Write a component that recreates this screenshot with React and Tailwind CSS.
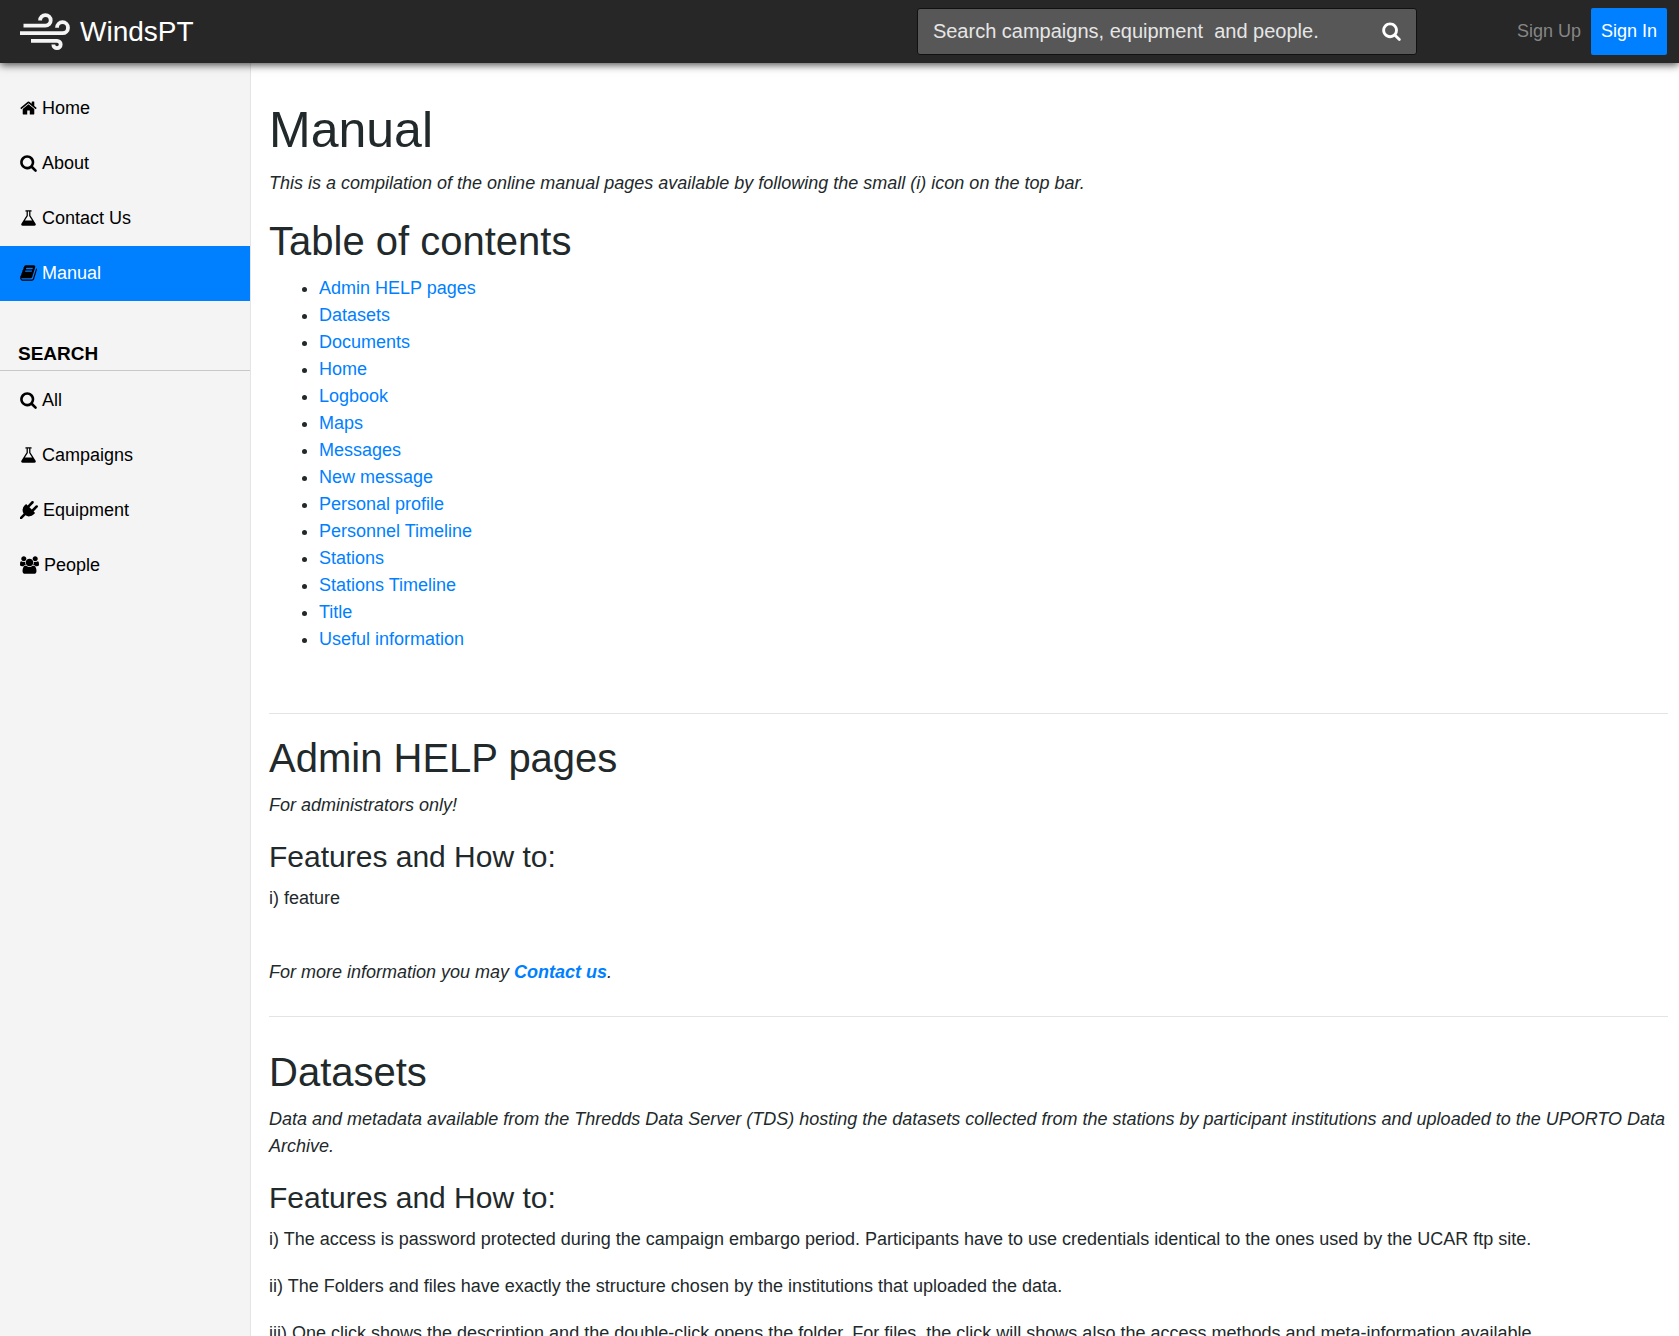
const ICONS = {
  home: [17, "64 0 1664 1792", "M1472 992v480q0 26-19 45t-45 19h-384v-384h-256v384h-384q-26 0-45-19t-19-45v-480q0-1 .5-3t.5-3l575-474 575 474q1 2 1 6zm223-69l-62 74q-8 9-21 11h-3q-13 0-21-7l-692-577-692 577q-12 8-24 7-13-2-21-11l-62-74q-8-10-7-23.500t11-21.500l719-599q32-26 76-26t76 26l244 204v-195q0-14 9-23t23-9h192q14 0 23 9t9 23v408l219 182q10 8 11 21.500t-7 23.500z"],
  search: [17, "64 0 1664 1792", "M1216 832q0-185-131.500-316.500t-316.500-131.500-316.500 131.500-131.500 316.500 131.500 316.500 316.500 131.500 316.500-131.500 131.500-316.500zm512 832q0 52-38 90t-90 38q-54 0-90-38l-343-342q-179 124-399 124-143 0-273.500-55.500t-225-150-150-225-55.500-273.500 55.500-273.500 150-225 225-150 273.500-55.500 273.500 55.500 225 150 150 225 55.500 273.500q0 220-124 399l343 343q37 37 37 90z"],
  flask: [17, "64 0 1664 1792", "M1591 1448q56 89 21.500 152.500t-140.500 63.500h-1152q-106 0-140.500-63.500t21.500-152.500l503-793v-399h-64q-26 0-45-19t-19-45 19-45 45-19h512q26 0 45 19t19 45-19 45-45 19h-64v399zm-779-725l-272 429h712l-272-429-20-31v-436h-128v436z"],
  book: [17, "64 0 1664 1792", "M1703 478q40 57 18 129l-275 906q-19 64-76.500 107.500t-122.500 43.500h-923q-77 0-148.500-53.500t-99.500-131.500q-24-67-2-127 0-4 3-27t4-37q1-8-3-21.500t-3-19.500q2-11 8-21t16.500-23.500 16.500-23.500q23-38 45-91.500t30-91.500q3-10 .5-30t-.5-28q3-11 17-28t17-23q21-36 42-92t25-90q1-9-2.500-32t.5-28q4-13 22-30.500t22-22.500q19-26 42.500-84.500t27.500-96.500q1-8-3-25.500t-2-26.500q2-8 9-18t18-23 17-21q8-12 16.500-30.500t15-35 16-36 19.500-32 26.500-23.500 36-11.500 47.500 5.500l-1 3q38-9 51-9h761q74 0 114 56t18 130l-274 906q-36 119-71.500 153.500t-128.500 34.500h-869q-27 0-38 15-11 16-1 43 24 70 144 70h923q29 0 56-15.500t35-41.500l300-987q7-22 5-57 38 15 59 43zm-1064 2q-4 13 2 22.500t20 9.500h608q13 0 25.500-9.500t16.500-22.500l21-64q4-13-2-22.500t-20-9.500h-608q-13 0-25.500 9.500t-16.500 22.500zm-83 256q-4 13 2 22.500t20 9.500h608q13 0 25.500-9.500t16.500-22.500l21-64q4-13-2-22.500t-20-9.500h-608q-13 0-25.500 9.500t-16.500 22.500z"],
  plug: [18, "0 0 1792 1792", "M1755 453q37 38 37 90.500t-37 90.500l-401 400 150 150-160 160q-163 163-389.500 186.500t-411.500-100.500l-362 362h-181v-181l362-362q-124-185-100.500-411.500t186.500-389.500l160-160 150 150 400-401q38-37 91-37t90 37 37 90.500-37 90.500l-400 401 234 234 401-400q38-37 91-37t90 37z"],
  group: [19, "0 0 1920 1792", "M593 896q-162 5-265 128h-134q-82 0-138-40.500t-56-118.500q0-353 124-353 6 0 43.500 21t97.500 42.500 119 21.500q67 0 133-23-5 37-5 66 0 139 81 256zm1071 637q0 120-73 189.500t-194 69.500h-874q-121 0-194-69.500t-73-189.500q0-53 3.500-103.500t14-109 26.500-108.500 43-97.500 62-81 85.500-53.500 111.500-20q10 0 43 21.500t73 48 107 48 135 21.500 135-21.500 107-48 73-48 43-21.500q61 0 111.500 20t85.500 53.500 62 81 43 97.500 26.500 108.500 14 109 3.500 103.500zm-1024-1277q0 106-75 181t-181 75-181-75-75-181 75-181 181-75 181 75 75 181zm704 384q0 159-112.500 271.500t-271.500 112.500-271.500-112.500-112.500-271.500 112.500-271.500 271.500-112.500 271.500 112.500 112.500 271.500zm576 225q0 78-56 118.500t-138 40.500h-134q-103-123-265-128 81-117 81-256 0-29-5-66 66 23 133 23 59 0 119-21.500t97.500-42.500 43.500-21q124 0 124 353zm-128-609q0 106-75 181t-181 75-181-75-75-181 75-181 181-75 181 75 75 181z"],
};

function Icon({ name }) {
  const [width, viewBox, d] = ICONS[name];
  return (
    <svg width={width} height="18" viewBox={viewBox} fill="#000" className="mb-0.5" aria-hidden="true">
      <path d={d} />
    </svg>
  );
}

function Logo() {
  return (
    <svg width="50" height="38" viewBox="0 0 50 38" fill="none" stroke="#f4f4f4" strokeWidth="3.8" aria-hidden="true">
      <path d="M3.500 12.700H25.400A5.300 5.300 0 1 0 20.100 7.400" />
      <path d="M0 20.200H42.500A5.500 5.500 0 1 0 37 14.700" />
      <path d="M11 27.800H37A3.700 3.700 0 1 1 33.300 31.500" />
    </svg>
  );
}

const MENU = [
  ["home", "Home"],
  ["search", "About"],
  ["flask", "Contact Us"],
  ["book", "Manual"],
];
const SEARCH_MENU = [
  ["search", "All"],
  ["flask", "Campaigns"],
  ["plug", "Equipment"],
  ["group", "People"],
];
const TOC = [
  "Admin HELP pages",
  "Datasets",
  "Documents",
  "Home",
  "Logbook",
  "Maps",
  "Messages",
  "New message",
  "Personal profile",
  "Personnel Timeline",
  "Stations",
  "Stations Timeline",
  "Title",
  "Useful information",
];

function NavItem({ icon, label, active }) {
  return (
    <li>
      <a
        href="#"
        aria-current={active ? "page" : undefined}
        className={`flex h-[55px] items-center gap-[5px] px-5 ${active ? "bg-[#007fff] text-white" : "text-black"}`}
      >
        <Icon name={icon} />
        {label}
      </a>
    </li>
  );
}

function H2({ children }) {
  return <h2 className="mb-2.5 text-[40px] leading-12">{children}</h2>;
}

function H3({ children }) {
  return <h3 className="mb-2.5 text-[30px] leading-9">{children}</h3>;
}

export default function App() {
  return (
    <div className="flex min-h-screen flex-col bg-white font-['Liberation_Sans',Arial,sans-serif] text-[18px] leading-[27px] text-[#22292b]">
      <header className="sticky top-0 z-10 flex h-[63px] shrink-0 items-center bg-[#272727] pr-3 pl-5 shadow-[0_2px_8px_rgba(0,0,0,0.7)]">
        <a href="#" className="flex items-center gap-2.5 text-[28px] text-white">
          <Logo />
          WindsPT
        </a>
        <form role="search" className="mr-[100px] ml-auto flex h-[47px] w-[500px] items-center rounded-[3px] border border-[#111] bg-[#575757] pr-[15px] pl-[15px]">
          <input
            type="text"
            aria-label="Search"
            placeholder="Search campaigns, equipment  and people."
            className="min-w-0 flex-1 bg-transparent text-[20px] text-white outline-none placeholder:text-[#e6e6e6]"
          />
          <button type="button" aria-label="Search" className="pb-0.5">
            <svg width="19" height="20" viewBox="64 0 1664 1792" fill="#fff" aria-hidden="true">
              <path d={ICONS.search[2]} />
            </svg>
          </button>
        </form>
        <a href="#" className="text-[#868686]">Sign Up</a>
        <a href="#" className="ml-2.5 flex h-[47px] items-center rounded-[2px] bg-[#007fff] px-2.5 text-white">
          Sign In
        </a>
      </header>
      <div className="flex flex-1">
        <nav className="w-[251px] shrink-0 border-r border-[#e4e4e4] bg-[#f4f4f4] pt-[18px]">
          <ul>
            {MENU.map(([icon, label]) => (
              <NavItem key={label} icon={icon} label={label} active={label === "Manual"} />
            ))}
          </ul>
          <h2 className="mt-[39px] mb-0.5 border-b border-[#c8c8c8] pb-[3px] pl-[18px] text-[19px] leading-[27px] font-bold text-black">SEARCH</h2>
          <ul>
            {SEARCH_MENU.map(([icon, label]) => (
              <NavItem key={label} icon={icon} label={label} />
            ))}
          </ul>
        </nav>
        <main className="min-w-0 flex-1 pt-[37px] pr-[11px] pl-[18px]">
          <h1 className="mb-2.5 text-[50px] leading-[60px]">Manual</h1>
          <p className="mb-5 italic">
            This is a compilation of the online manual pages available by following the small (i) icon on the top bar.
          </p>
          <H2>Table of contents</H2>
          <ul className="mb-[60px] list-disc pl-[50px]">
            {TOC.map((item) => (
              <li key={item}>
                <a href="#" className="text-[#007fff]">{item}</a>
              </li>
            ))}
          </ul>
          <hr className="mb-5 border-[#e3e4e4]" />
          <H2>Admin HELP pages</H2>
          <p className="mb-5 italic">For administrators only!</p>
          <H3>Features and How to:</H3>
          <p className="mb-[47px]">i) feature</p>
          <p className="mb-[30px] italic">
            For more information you may <a href="#" className="font-bold text-[#007fff]">Contact us</a>.
          </p>
          <hr className="mb-[31px] border-[#e3e4e4]" />
          <H2>Datasets</H2>
          <p className="mb-5 italic">
            Data and metadata available from the Thredds Data Server (TDS) hosting the datasets collected from the
            stations by participant institutions and uploaded to the UPORTO Data Archive.
          </p>
          <H3>Features and How to:</H3>
          <p className="mb-5">
            i) The access is password protected during the campaign embargo period. Participants have to use credentials
            identical to the ones used by the UCAR ftp site.
          </p>
          <p className="mb-5">
            ii) The Folders and files have exactly the structure chosen by the institutions that uploaded the data.
          </p>
          <p className="mb-5">
            iii) One click shows the description and the double-click opens the folder. For files, the click will shows
            also the access methods and meta-information available.
          </p>
        </main>
      </div>
    </div>
  );
}
